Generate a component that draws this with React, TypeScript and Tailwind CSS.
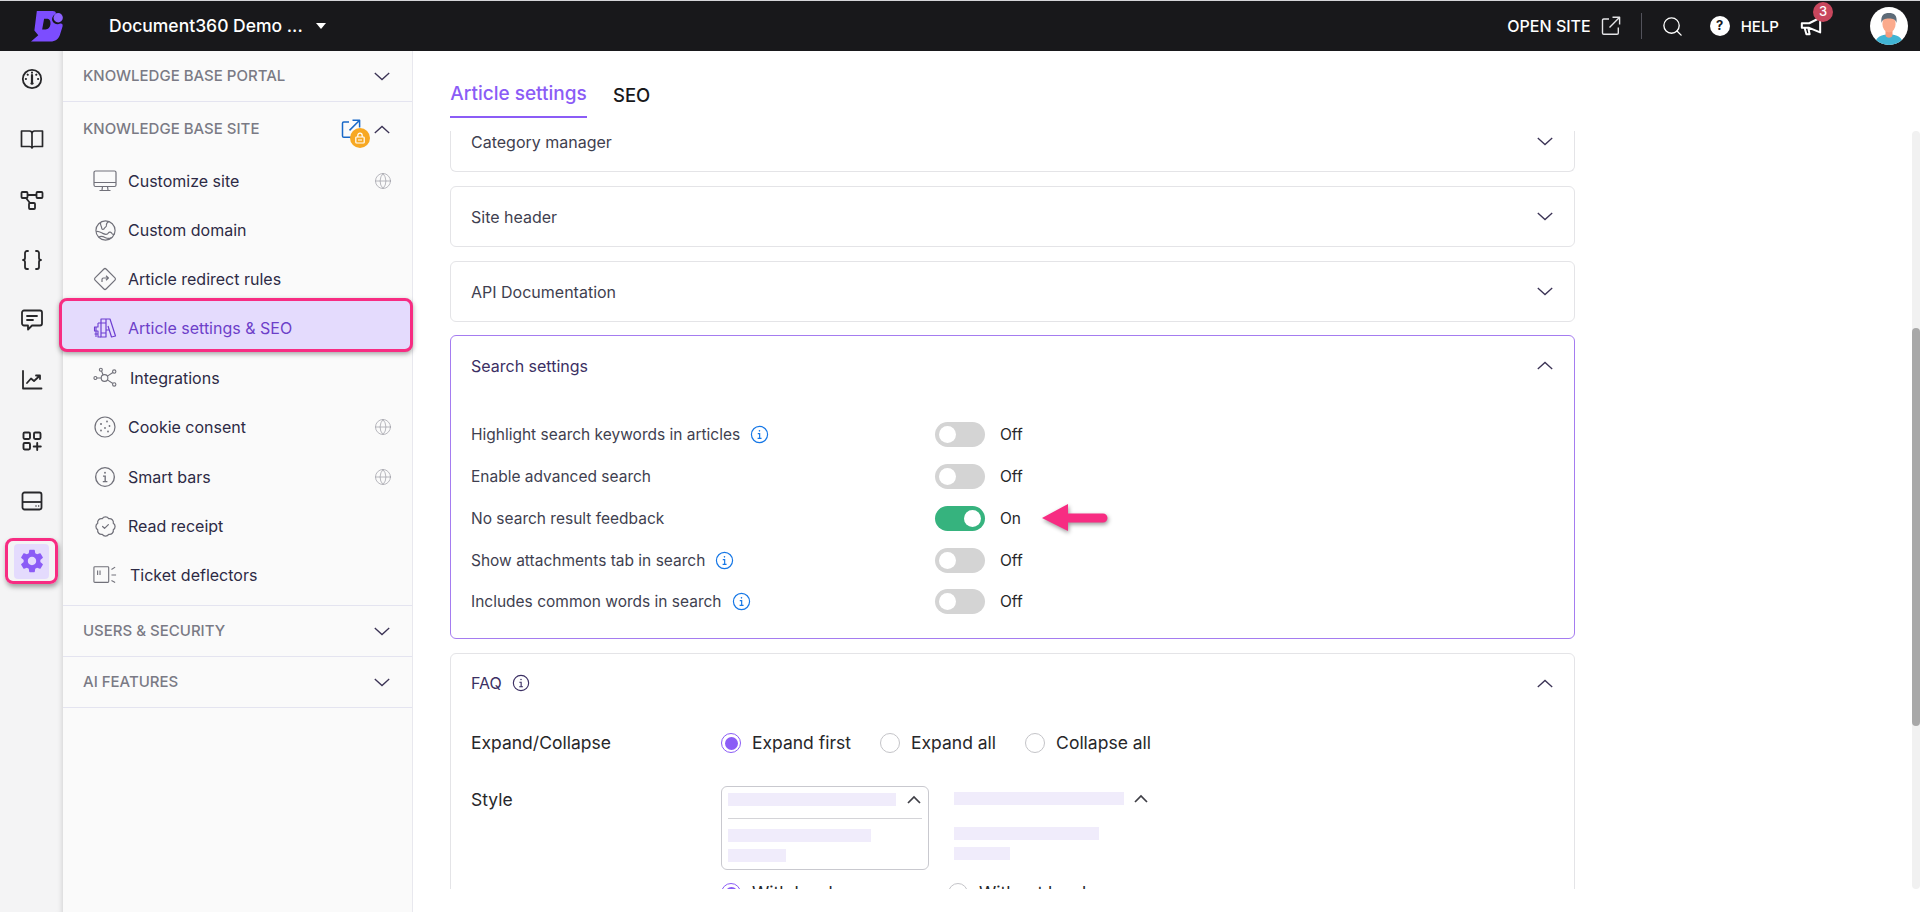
import { Braces, Globe, Search, BadgeCheck } from "lucide-react"
import { MdSettings } from "react-icons/md"

const sans = "font-['Inter','Liberation_Sans',sans-serif]"

function Logo() {
  return (
    <svg viewBox="0 0 36 34" className="w-[35px] h-[33px]">
      <path d="M7 1 H23 C26 1 27 2 26.5 4 C24 5 22 8 23 11 C24 14 28 15.5 31 14 C33 13.5 34 15 33.5 17 L31 25 C29.5 30 26 32.5 21 32.5 H1 L8.5 26 L4.5 21 Z M14.5 9 L12.5 20 L16 20 C19 20 20.5 18 21 15 C21.5 11 20 9 17 9 Z" fill="#7c4dff" fillRule="evenodd" />
      <circle cx="29" cy="8" r="4.8" fill="#8e63ff" />
    </svg>
  )
}

function Chevron({ up, color = "#3b3355" }: { up?: boolean; color?: string }) {
  return (
    <svg viewBox="0 0 16 9" className="w-[16px] h-[9px]" fill="none" stroke={color} strokeWidth="1.3">
      <path d={up ? "M.8 8 L8 1.4 L15.2 8" : "M.8 1 L8 7.6 L15.2 1"} />
    </svg>
  )
}

function SmallChevronUp() {
  return (
    <svg viewBox="0 0 14 9" className="w-[14px] h-[9px]" fill="none" stroke="#3f3f46" strokeWidth="1.7">
      <path d="M1 8 L7 2 L13 8" />
    </svg>
  )
}

function ExternalLink({ color, width }: { color: string; width: string }) {
  return (
    <svg viewBox="0 0 20 20" className="w-[20px] h-[20px]" fill="none" stroke={color} strokeWidth={width} strokeLinejoin="round">
      <path d="M8 3 H2.8 C2 3 1.5 3.5 1.5 4.3 V17 C1.5 17.8 2 18.3 2.8 18.3 H16 C16.8 18.3 17.3 17.8 17.3 17 V11.5" />
      <path d="M11.5 1.3 H18.6 V8.4 M18.6 1.3 L8.5 11.4" />
    </svg>
  )
}

function Dial() {
  return (
    <svg viewBox="0 0 24 24" className="w-[24px] h-[24px]" fill="none" stroke="#27272a" strokeWidth="1.8" strokeLinecap="round">
      <circle cx="12" cy="12" r="9.2" />
      <path d="M12 8 V15" strokeWidth="2.2" />
      <circle cx="12" cy="16.2" r="1.5" fill="#27272a" stroke="none" />
      <path d="M12 5.6 V5.8 M7.6 7.6 L7.8 7.8 M16.4 7.6 L16.2 7.8 M5.8 12 H6 M18.2 12 H18" strokeWidth="2" />
    </svg>
  )
}

function Book() {
  return (
    <svg viewBox="0 0 24 24" className="w-[24px] h-[24px]" fill="none" stroke="#27272a" strokeWidth="1.7" strokeLinejoin="round">
      <path d="M1.5 4 H9.5 C11 4 12 5 12 6.5 C12 5 13 4 14.5 4 H22.5 V19.5 H14.5 C13 19.5 12 20 12 21 C12 20 11 19.5 9.5 19.5 H1.5 Z M12 6.5 V21" />
    </svg>
  )
}

function Nodes() {
  return (
    <svg viewBox="0 0 24 24" className="w-[24px] h-[24px]" fill="none" stroke="#27272a" strokeWidth="1.8">
      <rect x="1.5" y="4" width="6" height="6" rx="1" />
      <rect x="16.5" y="4" width="6" height="6" rx="1" />
      <rect x="9" y="15" width="6" height="6" rx="1" />
      <path d="M7.5 7 H16.5 M6 10 L10 15" />
    </svg>
  )
}

function Chat() {
  return (
    <svg viewBox="0 0 24 24" className="w-[24px] h-[24px]" fill="none" stroke="#27272a" strokeWidth="1.8" strokeLinejoin="round" strokeLinecap="round">
      <path d="M4 2.5 H20 C21 2.5 22 3.5 22 4.5 V15.5 C22 16.5 21 17.5 20 17.5 H12 L8 21.5 V17.5 H4 C3 17.5 2 16.5 2 15.5 V4.5 C2 3.5 3 2.5 4 2.5 Z" />
      <path d="M7 8 H17 M7 12 H13" />
    </svg>
  )
}

function Chart() {
  return (
    <svg viewBox="0 0 24 24" className="w-[24px] h-[24px]" fill="none" stroke="#27272a" strokeWidth="1.8" strokeLinecap="round" strokeLinejoin="round">
      <path d="M3 3 V20.5 H21.5" />
      <path d="M7 15 L11 10.5 L14 13 L19.5 8 M16 7.5 H20 V11" />
    </svg>
  )
}

function Apps() {
  return (
    <svg viewBox="0 0 24 24" className="w-[24px] h-[24px]" fill="none" stroke="#27272a" strokeWidth="1.9" strokeLinecap="round">
      <rect x="3.5" y="3.5" width="6.5" height="6.5" rx="1.2" />
      <rect x="14" y="3.5" width="6.5" height="6.5" rx="1.2" />
      <rect x="3.5" y="14" width="6.5" height="6.5" rx="1.2" />
      <path d="M17.2 14 V21 M13.7 17.5 H20.8" />
    </svg>
  )
}

function Drive() {
  return (
    <svg viewBox="0 0 24 24" className="w-[24px] h-[24px]" fill="none" stroke="#27272a" strokeWidth="1.8">
      <rect x="2.5" y="3.5" width="19" height="17" rx="2" />
      <path d="M2.5 13 H21.5" />
      <path d="M15.5 17 H16.5 M18.2 17 H19.2" strokeWidth="1.6" />
    </svg>
  )
}

function Monitor() {
  return (
    <svg viewBox="0 0 24 24" className="w-[24px] h-[24px]" fill="none" stroke="#71717a" strokeWidth="1.2">
      <rect x="1" y="2" width="22" height="15.5" rx="1.5" />
      <path d="M1 13.5 H23 M9.5 17.5 L9 21 M14.5 17.5 L15 21 M6.5 21.5 H17.5" />
    </svg>
  )
}

function Planet() {
  return (
    <svg viewBox="0 0 24 24" className="w-[23px] h-[23px]" fill="none" stroke="#71717a" strokeWidth="1.2" strokeLinejoin="round">
      <circle cx="12" cy="12" r="10" />
      <path d="M7 3.5 C6 6 8 7.5 8 9.5 C8 11.5 10.5 11 11 9.5 C11.5 8 13.5 8.5 13 6.5 C12.7 5 14 3.5 15.5 2.7" />
      <path d="M2.3 13 C5 12.5 7 14 9 15 C11 16 14 16.5 15 14.5 C16 13 18 13.5 19 15.5 C20 16.5 21 16 21.6 15" />
      <path d="M5 19 C7 17.5 10 18.5 12 19.5 C14 20.5 16 20.5 18 19.7" />
    </svg>
  )
}

function Redirect() {
  return (
    <svg viewBox="0 0 24 24" className="w-[24px] h-[24px]" fill="none" stroke="#71717a" strokeWidth="1.2" strokeLinejoin="round">
      <rect x="4.2" y="4.2" width="15.6" height="15.6" rx="1.5" transform="rotate(45 12 12)" />
      <path d="M9 15 V12.5 C9 11.5 9.7 11 10.5 11 H15 M13 8.8 L15.4 11 L13 13.2" />
    </svg>
  )
}

function Books() {
  return (
    <svg viewBox="0 0 24 24" className="w-[24px] h-[24px]" fill="none" stroke="#6d3fd1" strokeWidth="1.2" strokeLinejoin="round">
      <path d="M8 3 H13 V21 H8 Z M8 7 H13 M8 17 H13 M13 3 H17 L22.5 20 L18.5 21 L15 10 M13 14 H16" />
      <path d="M5 7 V11 H1.5 V15 H5 V21 H8 M5 7 H8 M1.5 18 H5 M3 11 V21" strokeWidth="1.1" />
    </svg>
  )
}

function Hub() {
  return (
    <svg viewBox="0 0 26 24" className="w-[26px] h-[24px]" fill="none" stroke="#71717a" strokeWidth="1.2">
      <circle cx="12.5" cy="12" r="3.6" />
      <circle cx="2.6" cy="12" r="1.6" />
      <circle cx="8.5" cy="3" r="1.6" />
      <circle cx="23" cy="5" r="1.8" />
      <circle cx="23" cy="19" r="1.8" />
      <path d="M4.2 12 H8.9 M9.2 4.4 L11 8.7 M21.5 6 L15.6 10 M21.5 18 L15.6 14" />
    </svg>
  )
}

function Cookie() {
  return (
    <svg viewBox="0 0 24 24" className="w-[24px] h-[24px]" fill="none" stroke="#71717a" strokeWidth="1.2">
      <circle cx="12" cy="12" r="10" />
      <g fill="#71717a" stroke="none">
        <circle cx="8" cy="9" r="1" />
        <circle cx="14" cy="6.5" r=".9" />
        <circle cx="16.5" cy="11" r=".9" />
        <circle cx="12" cy="13" r=".9" />
        <circle cx="8" cy="15.5" r=".9" />
        <circle cx="15" cy="16.5" r=".9" />
      </g>
    </svg>
  )
}

function CircleI({ color, size }: { color: string; size: string }) {
  return (
    <svg viewBox="0 0 24 24" className={size} fill="none" stroke={color} strokeWidth="1.5">
      <circle cx="12" cy="12" r="10.2" />
      <circle cx="12" cy="7.4" r="1" fill={color} stroke="none" />
      <path d="M9.8 11 H12.2 V16.8 M9.6 17 H14.6" />
    </svg>
  )
}

function Ticket() {
  return (
    <svg viewBox="0 0 26 24" className="w-[26px] h-[24px]" fill="none" stroke="#71717a" strokeWidth="1.2">
      <rect x="1" y="3" width="16" height="17" rx="1" />
      <path d="M5 7 V12 M7.6 7 V12 M20 6 L24 3.5 M20 12 H25 M20 18 L24 20" />
    </svg>
  )
}

function LockedLink() {
  return (
    <div className="relative w-[20px] h-[20px]">
      <ExternalLink color="#1868c7" width="1.5" />
      <div className="absolute left-[9px] top-[9px] w-[20px] h-[20px] rounded-full bg-[#f7a823] flex items-center justify-center">
        <svg viewBox="0 0 12 12" className="w-[12px] h-[12px]" fill="none" stroke="#fff" strokeWidth="1.2">
          <rect x="1.8" y="5" width="8.4" height="6" rx=".8" />
          <path d="M3.8 5 V3.4 C3.8 2 4.8 1.2 6 1.2 C7.2 1.2 8.2 2 8.2 3.4 V5 M4 8 H8" />
        </svg>
      </div>
    </div>
  )
}

function Avatar() {
  return (
    <svg viewBox="0 0 38 38" className="w-[38px] h-[38px]">
      <clipPath id="avatar-clip"><circle cx="19" cy="19" r="19" /></clipPath>
      <g clipPath="url(#avatar-clip)">
        <rect width="38" height="38" fill="#fff" />
        <path d="M5 38 C5 30 11 27.5 19 27.5 C27 27.5 33 30 33 38 Z" fill="#41b4d4" />
        <path d="M15.5 22 H22.5 V28 C22.5 31.5 15.5 31.5 15.5 28 Z" fill="#f59a7c" />
        <ellipse cx="19" cy="17" rx="6.6" ry="8.4" fill="#fbaa8c" />
        <path d="M11.5 16 C10.5 8 14 6 19 6 C24 6 27.5 8 26.5 16 C25.5 12.5 23.5 11.5 19 11.5 C14.5 11.5 12.5 12.5 11.5 16 Z" fill="#5d6b78" />
      </g>
    </svg>
  )
}

function Header() {
  return (
    <header className="h-[51px] bg-[#18181b] border-t border-[#d4d4d8] flex items-center text-white shrink-0">
      <div className="ml-[30px] w-[35px] flex"><Logo /></div>
      <span className="ml-[44px] text-[17.5px] font-medium whitespace-nowrap">Document360 Demo ...</span>
      <span className="ml-[13px] w-0 h-0 border-x-[5px] border-x-transparent border-t-[6px] border-t-white" />
      <div className="ml-auto flex items-center">
        <span className="text-[16px] font-medium">OPEN SITE</span>
        <div className="ml-[10px] flex"><ExternalLink color="#e4e4e7" width="1.4" /></div>
        <span className="ml-[20px] w-px h-[26px] bg-[#52525b]" />
        <Search size={23} strokeWidth={1.4} className="ml-[19px]" />
        <span className="ml-[26px] w-[20px] h-[20px] rounded-full bg-white text-[#18181b] text-[13px] font-bold flex items-center justify-center">?</span>
        <span className="ml-[11px] mt-[3px] text-[15px] font-medium">HELP</span>
        <div className="relative ml-[21px] w-[20px] h-[22px]">
          <svg viewBox="0 0 24 24" className="w-[22px] h-[22px]" fill="none" stroke="#fff" strokeWidth="2.2" strokeLinejoin="round">
            <path d="M2 9 H10 L22 3 V19 L10 14 H2 Z M5 14 L7 21 H10.5 L9 14" />
          </svg>
          <span className="absolute left-[13px] top-[-13px] w-[20px] h-[20px] rounded-full bg-[#c8475d] text-white text-[13px] font-medium flex items-center justify-center">3</span>
        </div>
        <div className="ml-[50px] mr-[12px] flex"><Avatar /></div>
      </div>
    </header>
  )
}

const railIcons = [
  <Dial />,
  <Book />,
  <Nodes />,
  <Braces size={24} strokeWidth={1.8} color="#27272a" />,
  <Chat />,
  <Chart />,
  <Apps />,
  <Drive />,
]

function Rail() {
  return (
    <nav className="w-[63px] shrink-0 bg-[#f4f4f5] shadow-[inset_-6px_0_6px_-6px_rgba(0,0,0,0.18)] flex flex-col items-center pt-[16px]">
      {railIcons.map((icon, i) => (
        <div key={i} className="h-[60.3px] w-full flex items-start justify-center">{icon}</div>
      ))}
      <div className="mt-[-11px] w-[53px] h-[46px] border-[3px] border-[#f72c82] rounded-lg shadow-[1px_3px_5px_rgba(0,0,0,0.35)] flex items-center justify-center">
        <div className="w-[35px] h-[35px] rounded bg-[#e4dbfd] flex items-center justify-center">
          <MdSettings size={28} color="#8b5cf6" />
        </div>
      </div>
    </nav>
  )
}

function Section({ title, open, extra }: { title: string; open?: boolean; extra?: React.ReactNode }) {
  return (
    <div className={`flex items-center pl-[20px] pr-[22px] text-[15px] font-medium text-[#7a7a85] uppercase ${open ? "h-[54px] pb-[0px]" : "h-[51px] border-b border-[#e4e4f0]"}`}>
      <span>{title}</span>
      <div className="ml-auto flex items-center gap-[13px]">
        {extra}
        <Chevron up={open} />
      </div>
    </div>
  )
}

function Item({ icon, label, globe, wide }: { icon: React.ReactNode; label: string; globe?: boolean; wide?: boolean }) {
  return (
    <div className="h-[49.4px] flex items-center pl-[30px] pr-[20px] text-[16px] text-[#2d2a45]">
      <span className="w-[24px] flex justify-center">{icon}</span>
      <span className={wide ? "ml-[13px]" : "ml-[11px]"}>{label}</span>
      {globe && <Globe size={18} strokeWidth={1} color="#a1a1aa" className="ml-auto" />}
    </div>
  )
}

function Sidebar() {
  return (
    <aside className="w-[350px] shrink-0 bg-[#fafafa] border-r border-[#e8e8ee] flex flex-col">
      <Section title="Knowledge base portal" />
      <Section title="Knowledge base site" open extra={<LockedLink />} />
      <div className="pb-[5px] border-b border-[#e4e4f0]">
        <Item icon={<Monitor />} label="Customize site" globe />
        <Item icon={<Planet />} label="Custom domain" />
        <Item icon={<Redirect />} label="Article redirect rules" />
        <div className="relative z-10 ml-[-4px] mr-[-1px] h-[54px] mt-[-6px] mb-[1px] pt-[6px] border-[3px] border-[#f72c82] rounded-lg bg-[#e4dbfd] shadow-[0_2px_5px_rgba(0,0,0,0.35)] flex items-center pl-[31px] text-[16px] text-[#6d3fc9]">
          <span className="w-[24px] flex justify-center"><Books /></span>
          <span className="ml-[11px]">Article settings &amp; SEO</span>
        </div>
        <Item icon={<Hub />} label="Integrations" wide />
        <Item icon={<Cookie />} label="Cookie consent" globe />
        <Item icon={<CircleI color="#71717a" size="w-[22px] h-[22px]" />} label="Smart bars" globe />
        <Item icon={<BadgeCheck size={23} strokeWidth={1.3} color="#71717a" />} label="Read receipt" />
        <Item icon={<Ticket />} label="Ticket deflectors" wide />
      </div>
      <Section title="Users & security" />
      <Section title="AI features" />
    </aside>
  )
}

function Toggle({ on }: { on?: boolean }) {
  return (
    <div className="flex items-center">
      <div className={`w-[50px] h-[25px] rounded-full flex items-center px-[4px] ${on ? "bg-[#36b37e] justify-end" : "bg-[#d4d4d4]"}`}>
        <span className="w-[17px] h-[17px] rounded-full bg-white" />
      </div>
      <span className="ml-[15px] text-[15.5px] text-[#27272a]">{on ? "On" : "Off"}</span>
    </div>
  )
}

function SettingRow({ label, info, on }: { label: string; info?: boolean; on?: boolean }) {
  return (
    <div className="h-[41.75px] flex items-center">
      <div className="w-[464px] flex items-center gap-[10px] text-[15.5px] text-[#3f3f50]">
        <span>{label}</span>
        {info && <CircleI color="#1677e6" size="w-[19px] h-[19px]" />}
      </div>
      <Toggle on={on} />
    </div>
  )
}

function Card({ title, top }: { title: string; top?: boolean }) {
  return (
    <div className={`bg-white border-[#e4e4e7] flex items-center justify-between pl-[20px] pr-[21px] text-[16px] text-[#3f3f50] ${top ? "h-[41px] pb-[19px] border-x border-b rounded-b-md mb-[14px]" : "h-[61px] border rounded-md mb-[14px]"}`}>
      <span>{title}</span>
      <Chevron />
    </div>
  )
}

function Radio({ checked, label, className }: { checked?: boolean; label: string; className?: string }) {
  return (
    <div className={`flex items-center gap-[11px] ${className ?? ""}`}>
      <span className={`w-[20px] h-[20px] rounded-full border flex items-center justify-center ${checked ? "border-[#8b5cf6]" : "border-[#c4c4c8]"}`}>
        {checked && <span className="w-[13px] h-[13px] rounded-full bg-[#8b5cf6]" />}
      </span>
      <span className="text-[17.5px] text-[#27272a]">{label}</span>
    </div>
  )
}

function Bar({ width, className }: { width: string; className?: string }) {
  return <div className={`${width} h-[13px] bg-[#f0ecfb] ${className ?? ""}`} />
}

function Arrow() {
  return (
    <svg viewBox="0 0 66 28" className="w-[66px] h-[28px] ml-[21px] drop-shadow-[1px_2px_2px_rgba(0,0,0,0.4)]">
      <path d="M0 14 L26 0 V9.5 H61 A4.5 4.5 0 0 1 61 18.5 H26 V27 Z" fill="#f72c82" />
    </svg>
  )
}

function Main() {
  return (
    <main className="flex-1 min-w-0 bg-white flex flex-col">
      <div className="h-[80px] shrink-0 pl-[37px] flex items-start">
        <div className="h-[67px] w-[137px] border-b-[2px] border-[#8b5cf6] flex items-end justify-center pb-[8px] text-[19px] font-medium text-[#8b5cf6] whitespace-nowrap">Article settings</div>
        <div className="ml-[26px] h-[67px] flex items-end pb-[8px] text-[18.5px] font-medium text-[#18181b]">SEO</div>
      </div>
      <div className="flex h-[758px] overflow-hidden">
        <div className="w-[1125px] ml-[37px] shrink-0">
          <Card title="Category manager" top />
          <Card title="Site header" />
          <Card title="API Documentation" />
          <div className="h-[304px] -mt-px border border-[#a57cf0] rounded-md pl-[20px] pr-[21px] mb-[14px]">
            <div className="h-[59px] flex items-center justify-between text-[16px] text-[#3b2f63]">
              <span>Search settings</span>
              <Chevron up />
            </div>
            <div className="pt-[19px]">
              <SettingRow label="Highlight search keywords in articles" info />
              <SettingRow label="Enable advanced search" />
              <div className="flex items-center">
                <SettingRow label="No search result feedback" on />
                <Arrow />
              </div>
              <SettingRow label="Show attachments tab in search" info />
              <SettingRow label="Includes common words in search" info />
            </div>
          </div>
          <div className="h-[300px] border border-[#e4e4e7] rounded-md pl-[20px] pr-[21px]">
            <div className="h-[58px] flex items-center justify-between text-[16px] text-[#3b2f63]">
              <span className="flex items-center gap-[10px]">FAQ <CircleI color="#3b2f63" size="w-[18px] h-[18px]" /></span>
              <Chevron up />
            </div>
            <div className="mt-[19px] flex items-center h-[24px]">
              <span className="w-[250px] text-[17.5px] text-[#27272a]">Expand/Collapse</span>
              <Radio checked label="Expand first" />
              <Radio label="Expand all" className="ml-[29px]" />
              <Radio label="Collapse all" className="ml-[29px]" />
            </div>
            <div className="mt-[31px] flex items-start">
              <span className="w-[250px] text-[17.5px] text-[#27272a] mt-[1px]">Style</span>
              <div className="w-[208px]">
                <div className="h-[84px] border border-[#c9c9cf] rounded-md px-[6px] pt-[6px]">
                  <div className="flex items-center h-[13px]">
                    <Bar width="w-[168px]" />
                    <span className="ml-[11px] flex"><SmallChevronUp /></span>
                  </div>
                  <div className="h-px bg-[#d4d4d8] mt-[12px]" />
                  <Bar width="w-[143px]" className="mt-[10px]" />
                  <Bar width="w-[58px]" className="mt-[7px]" />
                </div>
                <Radio checked label="With border" className="mt-[10px]" />
              </div>
              <div className="ml-[25px] w-[200px] pt-[6px]">
                <div className="h-[84px]">
                  <div className="flex items-center h-[13px]">
                    <Bar width="w-[170px]" />
                    <span className="ml-[10px] flex"><SmallChevronUp /></span>
                  </div>
                  <Bar width="w-[145px]" className="mt-[22px]" />
                  <Bar width="w-[56px]" className="mt-[7px]" />
                </div>
                <Radio label="Without border" className="mt-[4px] ml-[-6px]" />
              </div>
            </div>
          </div>
        </div>
        <div className="ml-auto w-[8px] h-full rounded-full bg-[#f1f1f1] pt-[197px]">
          <div className="h-[398px] rounded-full bg-[#a8a8a8]" />
        </div>
      </div>
    </main>
  )
}

export default function App() {
  return (
    <div className={`${sans} h-[912px] w-[1920px] overflow-hidden flex flex-col bg-white`}>
      <Header />
      <div className="flex-1 min-h-0 flex">
        <Rail />
        <Sidebar />
        <Main />
      </div>
    </div>
  )
}
